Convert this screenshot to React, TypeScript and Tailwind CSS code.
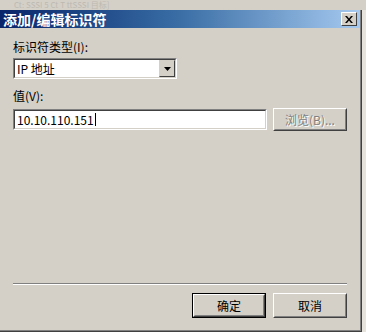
import React from "react";

const cjk = { fontFamily: '"SimSun", "Noto Sans CJK SC", sans-serif' };

function Btn({
  children,
  primary,
  disabled,
  className = "",
}: {
  children: React.ReactNode;
  primary?: boolean;
  disabled?: boolean;
  className?: string;
}) {
  return (
    <div className={`${primary ? "border border-black" : ""} ${className}`}>
      <div className="h-full border border-t-white border-l-white border-r-[#404040] border-b-[#404040] bg-[#d4d0c8]">
        <div className="flex h-full items-center justify-center border border-t-[#d4d0c8] border-l-[#d4d0c8] border-r-[#808080] border-b-[#808080] text-[12px]">
          <span className={disabled ? "text-[#808080] [text-shadow:1px_1px_0_#fff]" : "text-black"}>{children}</span>
        </div>
      </div>
    </div>
  );
}

function Sunken({ className = "", children }: { className?: string; children: React.ReactNode }) {
  return (
    <div className={`border border-t-[#808080] border-l-[#808080] border-r-white border-b-white ${className}`}>
      <div className="flex h-full items-center border border-t-[#404040] border-l-[#404040] border-r-[#d4d0c8] border-b-[#d4d0c8] bg-white">
        {children}
      </div>
    </div>
  );
}

export default function App() {
  return (
    <div className="flex h-[332px] w-[366px] flex-col overflow-hidden bg-[#d4d0c8]" style={cjk}>
      {/* window behind */}
      <div className="flex h-[10px] items-center overflow-hidden pl-[14px] text-[8px] leading-[10px] text-[#bdb9b1]">
        <span className="whitespace-nowrap">Ct: SSSI 5 Ct T ttSSSI 目标]</span>
      </div>

      <div className="flex flex-1 flex-row">
        <div className="flex w-[362px] flex-col border-r border-b border-r-[#404040] border-b-[#404040]">
          <div className="flex w-[361px] flex-1 flex-col border-r border-b border-r-[#808080] border-b-[#808080]">
            {/* title bar */}
            <div className="flex h-[18px] items-center justify-between bg-gradient-to-r from-[#0a246a] via-[#3a6ea5] to-[#a6caf0] pl-[3px] pr-[3px]">
              <span className="text-[14px] font-bold leading-none text-white">添加/编辑标识符</span>
              <div className="flex h-[14px] w-[16px] items-center justify-center border border-t-white border-l-white border-r-[#404040] border-b-[#404040] bg-[#d4d0c8]">
                <svg width="8" height="7" viewBox="0 0 8 7">
                  <path d="M0 0h2l2 2.5L6 0h2L5 3.5 8 7H6L4 4.5 2 7H0l3-3.5z" fill="#000" />
                </svg>
              </div>
            </div>

            <div className="flex flex-1 flex-col px-[13px] pt-[12px]">
              <div className="text-[12px] leading-[14px] text-black">标识符类型(I):</div>

              <Sunken className="mt-[4px] h-[21px] w-[164px]">
                <span className="flex-1 pl-[2px] text-[12px] text-black">IP 地址</span>
                <div className="flex h-[17px] w-[16px] items-center justify-center border border-t-[#d4d0c8] border-l-[#d4d0c8] border-r-[#404040] border-b-[#404040] bg-[#d4d0c8]">
                  <svg width="7" height="4" viewBox="0 0 7 4">
                    <path d="M0 0h7L3.5 4z" fill="#000" />
                  </svg>
                </div>
              </Sunken>

              <div className="mt-[10px] text-[12px] leading-[14px] text-black">值(V):</div>

              <div className="mt-[5px] flex items-center gap-[6px]">
                <Sunken className="h-[21px] w-[257px]">
                  <span className="pl-[2px] text-[12px] text-black">10.10.110.151</span>
                  <span className="ml-[1px] h-[13px] w-px bg-black" />
                </Sunken>
                <Btn disabled className="h-[23px] w-[75px]">
                  浏览(B)...
                </Btn>
              </div>

              <div className="flex-1" />

              <div className="border-t border-b border-t-[#808080] border-b-white" />

              <div className="mt-[8px] mb-[12px] flex justify-end gap-[7px]">
                <Btn primary className="h-[25px] w-[74px]">
                  确定
                </Btn>
                <Btn className="h-[25px] w-[74px]">取消</Btn>
              </div>
            </div>
          </div>
        </div>
        <div className="flex-1 bg-[#e6e3dd]" />
      </div>
    </div>
  );
}
